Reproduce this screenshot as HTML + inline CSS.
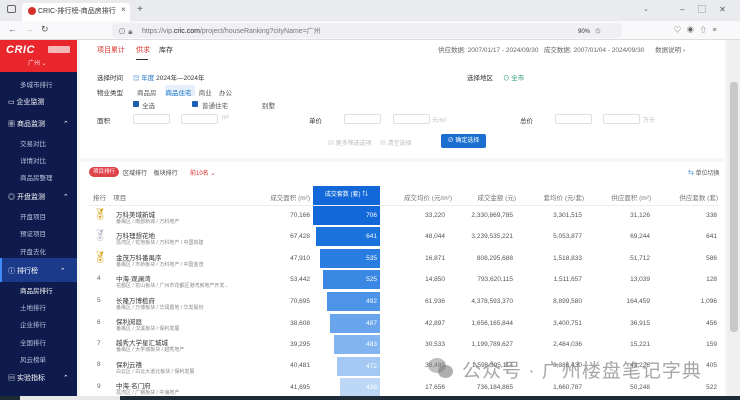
<!DOCTYPE html>
<html><head><meta charset="utf-8"><style>
*{margin:0;padding:0;box-sizing:border-box}
body{width:740px;height:400px;overflow:hidden;background:#f4f6f9;font-family:"Liberation Sans","Noto Sans CJK SC",sans-serif;font-size:7px;color:#333;position:relative}
.a{position:absolute;white-space:nowrap}
.sb{position:absolute;left:0;top:40px;width:77px;height:356px;background:#0f1b4c}
.si{position:absolute;left:20px;color:#b8c2dc;font-size:6.5px}
.sh{position:absolute;left:8px;color:#fff;font-size:7px}
.g{color:#888}
.num{position:absolute;text-align:right;color:#555;font-size:6.5px}
.bar{position:absolute;height:19px;color:#fff;font-size:6.5px;text-align:right;padding-right:3px;line-height:19px}
.inp{position:absolute;height:10px;border:1px solid #dcdfe6;background:#fff;border-radius:2px}
</style></head><body>
<!-- tab bar -->
<div class="a" style="left:0;top:0;width:740px;height:21px;background:#e9ebee"></div>
<div class="a" style="left:22px;top:3px;width:108px;height:18px;background:#fff;border-radius:4px 4px 0 0"></div>
<div class="a" style="left:28px;top:7px;width:8px;height:8px;border-radius:50%;background:#d9302a"></div>
<div class="a" style="left:38px;top:6px;font-size:7px;color:#333">CRIC-排行榜-商品房排行</div>
<div class="a" style="left:121px;top:5px;font-size:8px;color:#555">×</div>
<div class="a" style="left:137px;top:4px;font-size:10px;color:#555">+</div>
<div class="a" style="left:7px;top:5px;width:9px;height:8px;border:1px solid #666;border-radius:2px"></div>
<div class="a" style="left:643px;top:5px;color:#666;font-size:7px">⌄</div>
<div class="a" style="left:680px;top:4px;color:#555;font-size:8px">–&nbsp;&nbsp;&nbsp;&nbsp;&nbsp;&nbsp;▢&nbsp;&nbsp;&nbsp;&nbsp;&nbsp;&nbsp;✕</div>
<!-- address bar -->
<div class="a" style="left:0;top:21px;width:740px;height:19px;background:#f9f9fb;border-bottom:1px solid #ddd"></div>
<div class="a" style="left:8px;top:24px;color:#555;font-size:9px">←&nbsp;&nbsp;&nbsp;<span style="color:#bbb">→</span>&nbsp;&nbsp;&nbsp;↻</div>
<div class="a" style="left:112px;top:23px;width:510px;height:15px;background:#f0f0f4;border-radius:4px"></div>
<div class="a" style="left:118px;top:26px;color:#777;font-size:8px">⊙ 🔒︎</div>
<div class="a" style="left:142px;top:26px;color:#777;font-size:7px">https://vip.<b style="color:#222;font-weight:normal">cric.com</b>/project/houseRanking?cityName=广州</div>
<div class="a" style="left:578px;top:26px;color:#333;font-size:6px">90%&nbsp;&nbsp;&nbsp;☆</div>
<div class="a" style="left:674px;top:25px;color:#666;font-size:7px">♡&nbsp;&nbsp;&nbsp;◉&nbsp;&nbsp;&nbsp;⇧&nbsp;&nbsp;&nbsp;≡</div>
<!-- sidebar -->
<div class="sb"></div>
<div class="a" style="left:0;top:40px;width:77px;height:32px;background:#e8262c"></div>
<div class="a" style="left:6px;top:44px;color:#fff;font-size:11px;font-weight:bold;font-style:italic;letter-spacing:0.5px">CRIC</div>
<div class="a" style="left:48px;top:46px;width:22px;height:7px;background:#f5b8b8;border-radius:1px"></div>
<div class="a" style="left:28px;top:58px;color:#fde;font-size:6px">广州 ⌄</div>
<div class="si" style="top:79px">多城市排行</div>
<div class="sh" style="top:97px">▭ 企业监测</div>
<div class="sh" style="top:119px">▦ 商品监测 <span style="margin-left:16px">⌃</span></div>
<div class="si" style="top:138px">交易对比</div>
<div class="si" style="top:155px">详情对比</div>
<div class="si" style="top:172px">商品房整理</div>
<div class="sh" style="top:192px">◎ 开盘监测 <span style="margin-left:16px">⌃</span></div>
<div class="si" style="top:211px">开盘项目</div>
<div class="si" style="top:228px">预证项目</div>
<div class="si" style="top:246px">开盘去化</div>
<div class="a" style="left:0;top:258px;width:77px;height:24px;background:#1c3a8a"></div>
<div class="a" style="left:0;top:258px;width:2px;height:24px;background:#3d8bff"></div>
<div class="sh" style="top:266px">ⓘ 排行榜 <span style="margin-left:20px">⌃</span></div>
<div class="si" style="top:285px;color:#fff">商品房排行</div>
<div class="si" style="top:302px">土地排行</div>
<div class="si" style="top:319px">企业排行</div>
<div class="si" style="top:337px">全国排行</div>
<div class="si" style="top:354px">风云榜单</div>
<div class="sh" style="top:373px">▤ 实验指标 <span style="margin-left:16px">⌃</span></div>
<!-- main panel -->
<div class="a" style="left:80px;top:40px;width:645px;height:118px;background:#fff"></div>
<div class="a" style="left:97px;top:45px;color:#d9302a;font-size:7px">项目累计</div>
<div class="a" style="left:136px;top:45px;color:#d9302a;font-size:7px">供求</div>
<div class="a" style="left:136px;top:59px;width:12px;height:1px;background:#333"></div>
<div class="a" style="left:159px;top:45px;color:#333;font-size:7px">库存</div>
<div class="a" style="left:438px;top:44px;color:#666;font-size:6.5px">供应数据: 2007/01/17 - 2024/09/30&nbsp;&nbsp;&nbsp;成交数据: 2007/01/04 - 2024/09/30&nbsp;&nbsp;&nbsp;&nbsp;&nbsp;&nbsp;数据说明 ›</div>
<div class="a" style="left:97px;top:72px;color:#333;font-size:6.5px">选择时间</div>
<div class="a" style="left:133px;top:72px;color:#333;font-size:6.5px"><span style="color:#1a73c8">▤ 年度</span> 2024年—2024年</div>
<div class="a" style="left:467px;top:72px;color:#333;font-size:6.5px">选择地区</div>
<div class="a" style="left:503px;top:72px;color:#2a9a6a;font-size:6.5px">⊙ 全市</div>
<div class="a" style="left:97px;top:87px;color:#333;font-size:6.5px">物业类型</div>
<div class="a" style="left:165px;top:85px;width:30px;height:11px;background:#e6f0fb"></div>
<div class="a" style="left:137px;top:87px;color:#555;font-size:6.5px">商品房&nbsp;&nbsp;&nbsp;&nbsp;&nbsp;<span style="color:#1a73c8">商品住宅</span>&nbsp;&nbsp;&nbsp;&nbsp;商业&nbsp;&nbsp;&nbsp;&nbsp;办公</div>
<div class="a" style="left:133px;top:101px;width:6px;height:6px;background:#1a5fb4;border-radius:1px"></div>
<div class="a" style="left:142px;top:100px;color:#555;font-size:6.5px">全选</div>
<div class="a" style="left:192px;top:101px;width:6px;height:6px;background:#1a5fb4;border-radius:1px"></div>
<div class="a" style="left:202px;top:100px;color:#555;font-size:6.5px">普通住宅</div>
<div class="a" style="left:262px;top:100px;color:#555;font-size:6.5px">别墅</div>
<div class="a" style="left:97px;top:115px;color:#333;font-size:6.5px">面积</div>
<div class="inp" style="left:133px;top:114px;width:37px"></div>
<div class="inp" style="left:181px;top:114px;width:37px"></div>
<div class="a" style="left:222px;top:115px;color:#bbb;font-size:6px">m²</div>
<div class="a" style="left:309px;top:115px;color:#333;font-size:6.5px">单价</div>
<div class="inp" s style="left:344px;top:114px;width:37px"></div>
<div class="inp" style="left:393px;top:114px;width:37px"></div>
<div class="a" style="left:432px;top:115px;color:#bbb;font-size:6px">元/m²</div>
<div class="a" style="left:520px;top:115px;color:#333;font-size:6.5px">总价</div>
<div class="inp" style="left:555px;top:114px;width:37px"></div>
<div class="inp" style="left:603px;top:114px;width:37px"></div>
<div class="a" style="left:643px;top:115px;color:#bbb;font-size:6px">万元</div>
<div class="a" style="left:328px;top:138px;color:#bbb;font-size:6px">▤ 更多筛选选项&nbsp;&nbsp;&nbsp;&nbsp;&nbsp;▤ 清空选择</div>
<div class="a" style="left:441px;top:134px;width:45px;height:14px;background:#1a6fd0;border-radius:2px;color:#fff;font-size:6px;line-height:14px;text-align:center">⊘ 确定选择</div>
<!-- table panel -->
<div class="a" style="left:80px;top:162px;width:645px;height:234px;background:#fff"></div>
<div class="a" style="left:89px;top:167px;width:30px;height:10px;background:#e0424a;border-radius:5px;color:#fff;font-size:5.5px;line-height:10px;text-align:center">项目排行</div>
<div class="a" style="left:123px;top:168px;color:#444;font-size:6px">区域排行&nbsp;&nbsp;&nbsp;&nbsp;板块排行</div>
<div class="a" style="left:190px;top:168px;color:#d9302a;font-size:6px">前10名 ⌄</div>
<div class="a" style="left:688px;top:168px;color:#1a73c8;font-size:6px">⇆ <span style="color:#555">单位切换</span></div>
<div class="a" style="left:93px;top:192px;color:#666;font-size:6.5px">排行&nbsp;&nbsp;&nbsp;&nbsp;项目</div>
<div class="num" style="left:240px;top:192px;width:70px;color:#777">成交面积 (m²)</div>
<div class="a" style="left:313px;top:186px;width:67px;height:19px;background:#1268d8;color:#fff;font-size:6px;line-height:19px;text-align:center">成交套数 (套) ⇅</div>
<div class="num" style="left:380px;top:192px;width:72px;color:#777">成交均价 (元/m²)</div>
<div class="num" style="left:450px;top:192px;width:66px;color:#777">成交金额 (元)</div>
<div class="num" style="left:520px;top:192px;width:64px;color:#777">套均价 (元/套)</div>
<div class="num" style="left:585px;top:192px;width:66px;color:#777">供应面积 (m²)</div>
<div class="num" style="left:650px;top:192px;width:68px;color:#777">供应套数 (套)</div>
<div id="rows"></div>
<script></script>
<!-- rows (static) -->
<div class="a" style="left:88px;top:205px;width:630px;height:1px;background:#eee"></div>

<div class="a" style="left:93px;top:208px;color:#d9a520;font-size:11px">🏅︎</div>
<div class="a" style="left:116px;top:209px;color:#333;font-size:6.5px">万科美域新城</div>
<div class="a g" style="left:116px;top:218px;font-size:5px">番禺区 / 南部新城 / 万科地产</div>
<div class="num" style="left:250px;top:212px;width:60px">70,166</div>
<div class="bar" style="left:313px;top:206px;width:67px;background:#1268d8">706</div>
<div class="num" style="left:390px;top:212px;width:55px">33,220</div><div class="num" style="left:450px;top:212px;width:63px">2,330,869,785</div><div class="num" style="left:520px;top:212px;width:62px">3,301,515</div><div class="num" style="left:590px;top:212px;width:60px">31,126</div><div class="num" style="left:660px;top:212px;width:57px">338</div>

<div class="a" style="left:93px;top:229px;color:#b5b9c8;font-size:11px">🏅︎</div>
<div class="a" style="left:116px;top:230px;color:#333;font-size:6.5px">万科理想花地</div>
<div class="a g" style="left:116px;top:239px;font-size:5px">荔湾区 / 花地板块 / 万科地产 / 中国铁建</div>
<div class="num" style="left:250px;top:233px;width:60px">67,428</div>
<div class="bar" style="left:316px;top:227px;width:64px;background:#1a72dc">641</div>
<div class="num" style="left:390px;top:233px;width:55px">48,044</div><div class="num" style="left:450px;top:233px;width:63px">3,239,535,221</div><div class="num" style="left:520px;top:233px;width:62px">5,053,877</div><div class="num" style="left:590px;top:233px;width:60px">69,244</div><div class="num" style="left:660px;top:233px;width:57px">641</div>

<div class="a" style="left:93px;top:251px;color:#d9a520;font-size:11px">🏅︎</div>
<div class="a" style="left:116px;top:252px;color:#333;font-size:6.5px">金茂万科番禺序</div>
<div class="a g" style="left:116px;top:261px;font-size:5px">番禺区 / 市桥板块 / 万科地产 / 中国金茂</div>
<div class="num" style="left:250px;top:255px;width:60px">47,910</div>
<div class="bar" style="left:320px;top:249px;width:60px;background:#2a7de0">535</div>
<div class="num" style="left:390px;top:255px;width:55px">16,871</div><div class="num" style="left:450px;top:255px;width:63px">808,295,688</div><div class="num" style="left:520px;top:255px;width:62px">1,518,833</div><div class="num" style="left:590px;top:255px;width:60px">51,712</div><div class="num" style="left:660px;top:255px;width:57px">586</div>

<div class="a" style="left:97px;top:275px;color:#666;font-size:6.5px">4</div>
<div class="a" style="left:116px;top:273px;color:#333;font-size:6.5px">中海·观澜湾</div>
<div class="a g" style="left:116px;top:282px;font-size:5px">花都区 / 花山板块 / 广州市花都区港湾房地产开发...</div>
<div class="num" style="left:250px;top:276px;width:60px">53,442</div>
<div class="bar" style="left:323px;top:270px;width:57px;background:#3a88e4">525</div>
<div class="num" style="left:390px;top:276px;width:55px">14,850</div><div class="num" style="left:450px;top:276px;width:63px">793,620,115</div><div class="num" style="left:520px;top:276px;width:62px">1,511,657</div><div class="num" style="left:590px;top:276px;width:60px">13,039</div><div class="num" style="left:660px;top:276px;width:57px">128</div>

<div class="a" style="left:97px;top:297px;color:#666;font-size:6.5px">5</div>
<div class="a" style="left:116px;top:295px;color:#333;font-size:6.5px">长隆万博榄府</div>
<div class="a g" style="left:116px;top:304px;font-size:5px">番禺区 / 万博板块 / 华润置地 / 华发股份</div>
<div class="num" style="left:250px;top:298px;width:60px">70,695</div>
<div class="bar" style="left:327px;top:292px;width:53px;background:#4d94e8">492</div>
<div class="num" style="left:390px;top:298px;width:55px">61,936</div><div class="num" style="left:450px;top:298px;width:63px">4,378,593,370</div><div class="num" style="left:520px;top:298px;width:62px">8,899,580</div><div class="num" style="left:590px;top:298px;width:60px">164,459</div><div class="num" style="left:660px;top:298px;width:57px">1,096</div>

<div class="a" style="left:97px;top:319px;color:#666;font-size:6.5px">6</div>
<div class="a" style="left:116px;top:316px;color:#333;font-size:6.5px">保利阅庭</div>
<div class="a g" style="left:116px;top:325px;font-size:5px">番禺区 / 汉溪板块 / 保利发展</div>
<div class="num" style="left:250px;top:320px;width:60px">38,608</div>
<div class="bar" style="left:330px;top:314px;width:50px;background:#68a5ec">487</div>
<div class="num" style="left:390px;top:320px;width:55px">42,897</div><div class="num" style="left:450px;top:320px;width:63px">1,656,165,844</div><div class="num" style="left:520px;top:320px;width:62px">3,400,751</div><div class="num" style="left:590px;top:320px;width:60px">36,915</div><div class="num" style="left:660px;top:320px;width:57px">456</div>

<div class="a" style="left:97px;top:340px;color:#666;font-size:6.5px">7</div>
<div class="a" style="left:116px;top:337px;color:#333;font-size:6.5px">越秀大学星汇城城</div>
<div class="a g" style="left:116px;top:346px;font-size:5px">番禺区 / 大学城板块 / 越秀地产</div>
<div class="num" style="left:250px;top:341px;width:60px">39,295</div>
<div class="bar" style="left:334px;top:335px;width:46px;background:#82b5ef">483</div>
<div class="num" style="left:390px;top:341px;width:55px">30,533</div><div class="num" style="left:450px;top:341px;width:63px">1,199,789,627</div><div class="num" style="left:520px;top:341px;width:62px">2,484,036</div><div class="num" style="left:590px;top:341px;width:60px">15,221</div><div class="num" style="left:660px;top:341px;width:57px">159</div>

<div class="a" style="left:97px;top:361px;color:#666;font-size:6.5px">8</div>
<div class="a" style="left:116px;top:359px;color:#333;font-size:6.5px">保利云禧</div>
<div class="a g" style="left:116px;top:368px;font-size:5px">白云区 / 白云大道北板块 / 保利发展</div>
<div class="num" style="left:250px;top:362px;width:60px">40,481</div>
<div class="bar" style="left:337px;top:357px;width:43px;background:#a3c8f3">472</div>
<div class="num" style="left:390px;top:362px;width:55px">39,485</div><div class="num" style="left:450px;top:362px;width:63px">1,598,395,114</div><div class="num" style="left:520px;top:362px;width:62px">3,386,430</div><div class="num" style="left:590px;top:362px;width:60px">43,228</div><div class="num" style="left:660px;top:362px;width:57px">405</div>

<div class="a" style="left:97px;top:383px;color:#666;font-size:6.5px">9</div>
<div class="a" style="left:116px;top:380px;color:#333;font-size:6.5px">中海·名门府</div>
<div class="a g" style="left:116px;top:389px;font-size:5px">荔湾区 / 广钢板块 / 中海地产</div>
<div class="num" style="left:250px;top:384px;width:60px">41,695</div>
<div class="bar" style="left:340px;top:378px;width:40px;background:#bcd8f6">438</div>
<div class="num" style="left:390px;top:384px;width:55px">17,656</div><div class="num" style="left:450px;top:384px;width:63px">736,184,865</div><div class="num" style="left:520px;top:384px;width:62px">1,660,787</div><div class="num" style="left:590px;top:384px;width:60px">50,248</div><div class="num" style="left:660px;top:384px;width:57px">522</div>

<!-- watermark -->
<div class="a" style="left:428px;top:358px;width:18px;height:15px;border-radius:50%;background:rgba(140,140,140,.55)"></div>
<div class="a" style="left:438px;top:365px;width:15px;height:13px;border-radius:50%;background:rgba(120,120,120,.6)"></div>
<div class="a" style="left:462px;top:356px;color:rgba(130,130,130,.7);font-size:19px;letter-spacing:1px">公众号 · 广州楼盘笔记字典</div>
<!-- scrollbar -->
<div class="a" style="left:727px;top:40px;width:13px;height:356px;background:#f0f0f0"></div>
<div class="a" style="left:730px;top:82px;width:8px;height:250px;background:#c8c8c8;border-radius:3px"></div>
<!-- taskbar -->
<div class="a" style="left:0;top:396px;width:740px;height:4px;background:#1e2a36"></div>
<div class="a" style="left:20px;top:396px;width:100px;height:4px;background:#e8e8e8"></div>
</body></html>
